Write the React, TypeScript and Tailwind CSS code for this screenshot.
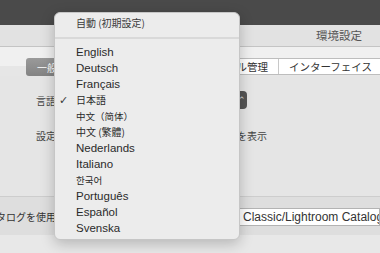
const latin = "font-['Liberation_Sans','Noto_Sans_CJK_JP',sans-serif]";

type Item = { label: string; font: string; checked?: boolean };

const lat = "text-[11.5px] font-['Liberation_Sans',sans-serif]";

const languages: Item[] = [
  { label: "English", font: lat },
  { label: "Deutsch", font: lat },
  { label: "Français", font: lat },
  { label: "日本語", font: "text-[10px] font-['Noto_Sans_CJK_JP',sans-serif]", checked: true },
  { label: "中文（简体）", font: "text-[9.5px] font-['Noto_Sans_CJK_SC',sans-serif]" },
  { label: "中文 (繁體)", font: "text-[10px] font-['Noto_Sans_CJK_TC',sans-serif]" },
  { label: "Nederlands", font: lat },
  { label: "Italiano", font: lat },
  { label: "한국어", font: "text-[9.5px] font-['Noto_Sans_CJK_KR',sans-serif]" },
  { label: "Português", font: lat },
  { label: "Español", font: lat },
  { label: "Svenska", font: lat },
];

function MenuRow({ item }: { item: Item }) {
  return (
    <div className="flex h-[16px] items-center text-[#2a2a2a]">
      <span className="w-[21px] pl-[4px] text-[11px] leading-none font-['DejaVu_Sans',sans-serif] text-[#3a3a3a]">
        {item.checked ? "✓" : ""}
      </span>
      <span className={`${item.font} leading-[16px] whitespace-nowrap`}>{item.label}</span>
    </div>
  );
}

function LanguageMenu() {
  return (
    <div className="absolute left-[54px] top-[12px] w-[186px] h-[228px] rounded-[6px] border border-[#c6c6c6] bg-[#ececec] py-[2px] shadow-[0_4px_14px_rgba(0,0,0,0.22)]">
      <MenuRow item={{ label: "自動 (初期設定)", font: "text-[10px] font-['Noto_Sans_CJK_JP',sans-serif] text-[#3a3a3a]" }} />
      <div className="flex h-[13px] items-center">
        <div className="h-[2px] w-full bg-[#d9d9d9]" />
      </div>
      {languages.map((it) => (
        <MenuRow key={it.label} item={it} />
      ))}
    </div>
  );
}

export default function App() {
  return (
    <div className={`relative w-[380px] h-[253px] overflow-hidden bg-[#e8e8e8] ${latin}`}>
      <div className="h-[25px] bg-[#4a4a4a]" />

      <div className="flex h-[22px] items-center justify-end border-b border-[#c4c4c4] bg-[#e2e2e2] pr-[18px] text-[11.5px] text-[#555] font-['Noto_Sans_CJK_JP',sans-serif]">
        環境設定
      </div>

      <div className="flex h-[29px] items-end bg-[linear-gradient(#f0f0f0_0,#f0f0f0_19px,#e6e6e6_19px)] font-['Noto_Sans_CJK_JP',sans-serif]">
        <div className="ml-[26px] flex h-[18px] w-[44px] items-center rounded-[3px] bg-[linear-gradient(#9a9a9a,#838383)] pl-[11px] text-[10px] text-white">
          一般
        </div>
        <div className="ml-auto mb-[1px] flex h-[17px] items-center border-y border-[#bdbdbd] bg-white text-[10.5px] text-[#333] whitespace-nowrap">
          <div className="flex h-full items-center border-r border-[#c8c8c8] px-[10px]">ファイル管理</div>
          <div className="flex h-full items-center pl-[10px] pr-[8px]">インターフェイス</div>
        </div>
      </div>

      <div className="h-[121px] border-b border-[#cdcdcd] bg-[#e5e5e5] pt-[15px] text-[10px] text-[#444] font-['Noto_Sans_CJK_JP',sans-serif]">
        <div className="flex h-[18px] items-center justify-between">
          <span className="pl-[36px]">言語</span>
          <div className="mr-[133px] flex h-[18px] w-[60px] items-center justify-end rounded-[4px] bg-[#555] pr-[1px] text-[9px] text-[#ddd]">
            ⌃
          </div>
        </div>
        <div className="mt-[18px] flex h-[16px] items-center justify-between">
          <span className="pl-[36px]">設定</span>
          <span className="mr-[113px] whitespace-nowrap">スプラッシュスクリーンを表示</span>
        </div>
      </div>

      <div className="flex h-[38px] items-center justify-between bg-[#dedede]">
        <div className="flex w-[56px] justify-end overflow-hidden whitespace-nowrap text-[10px] text-[#333] font-['Noto_Sans_CJK_JP',sans-serif]">
          起動時にこのカタログを使用
        </div>
        <div className="mt-[1px] flex h-[18px] w-[141px] items-center overflow-hidden border border-[#b3b3b3] bg-white pl-[3px] text-[12px] text-[#333] whitespace-nowrap">
          Classic/Lightroom Catalog.lrcat
        </div>
      </div>

      <LanguageMenu />
    </div>
  );
}
